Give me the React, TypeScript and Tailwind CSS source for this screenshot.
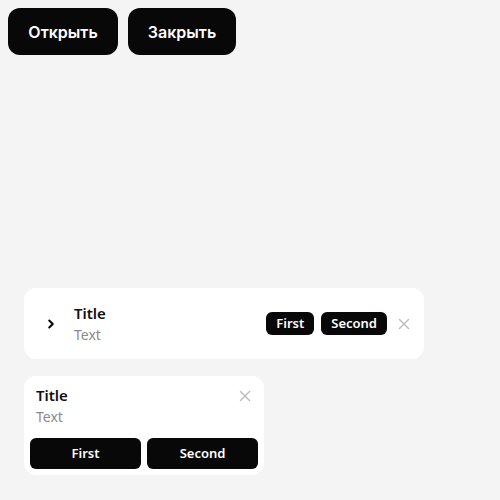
import React from 'react';
import { ChevronRight, X } from 'lucide-react';

const Badge = ({ children }: { children: React.ReactNode }) => (
  <span className="flex h-[23px] items-center rounded-[6px] bg-[#080808] px-[10px] text-[13px] font-semibold text-white">
    {children}
  </span>
);

export default function App() {
  return (
    <div
      className="min-h-[500px] w-[500px] bg-[#f4f4f4]"
      style={{ fontFamily: '"Noto Sans", sans-serif' }}
    >
      {/* Top actions */}
      <div className="flex gap-[10px] p-[8px]">
        <button
          className="h-[47px] w-[110px] rounded-[12px] bg-[#080808] text-[16px] font-semibold text-white"
          style={{ fontFamily: 'Inter, sans-serif' }}
        >
          Открыть
        </button>
        <button
          className="h-[47px] w-[108px] rounded-[12px] bg-[#080808] text-[16px] font-semibold text-white"
          style={{ fontFamily: 'Inter, sans-serif' }}
        >
          Закрыть
        </button>
      </div>

      <div className="mt-[225px] flex flex-col gap-[17px] px-[24px]">
        {/* Wide card */}
        <div className="flex h-[71px] w-[400px] items-center rounded-[12px] bg-white pl-[20px] pr-[11px]">
          <ChevronRight className="h-[14px] w-[14px] text-[#080808]" strokeWidth={3.5} />
          <div className="ml-[16px] flex flex-1 flex-col">
            <span className="text-[15px] font-semibold leading-[22px] text-[#111]">Title</span>
            <span className="text-[14px] leading-[22px] text-[#8a8a8a]">Text</span>
          </div>
          <div className="flex gap-[7px]">
            <Badge>First</Badge>
            <Badge>Second</Badge>
          </div>
          <X className="ml-[8px] h-[18px] w-[18px] text-[#bdbdbd]" strokeWidth={2} />
        </div>

        {/* Narrow card */}
        <div className="flex w-[240px] flex-col rounded-[12px] bg-white p-[6px]">
          <div className="flex items-start justify-between pl-[6px] pr-[4px] pt-[2px]">
            <div className="flex flex-col">
              <span className="text-[15px] font-semibold leading-[22px] text-[#111]">Title</span>
              <span className="text-[14px] leading-[22px] text-[#8a8a8a]">Text</span>
            </div>
            <X className="mt-[3px] h-[18px] w-[18px] text-[#bdbdbd]" strokeWidth={2} />
          </div>
          <div className="mt-[10px] grid grid-cols-2 gap-[6px]">
            <button className="h-[31px] rounded-[6px] bg-[#080808] text-[13px] font-semibold text-white">
              First
            </button>
            <button className="h-[31px] rounded-[6px] bg-[#080808] text-[13px] font-semibold text-white">
              Second
            </button>
          </div>
        </div>
      </div>
    </div>
  );
}
